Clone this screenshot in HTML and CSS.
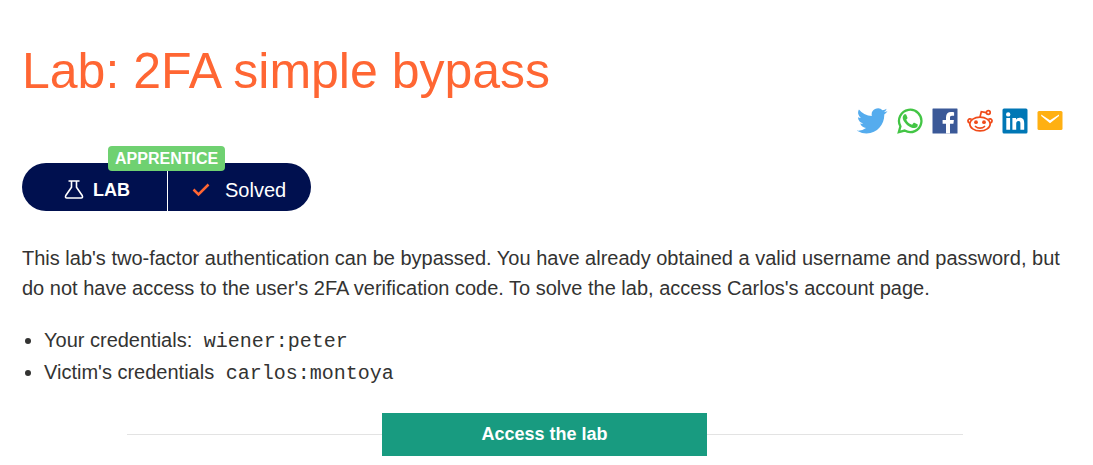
FILE: index.html
```html
<!DOCTYPE html>
<html lang="en">
<head>
<meta charset="utf-8">
<title>Lab: 2FA simple bypass</title>
<link rel="stylesheet" href="styles.css">
</head>
<body>
<main class="page">
  <h1 class="title">Lab: 2FA simple bypass</h1>
  <nav class="share" aria-label="Share">
    <a class="share-link" href="#" aria-label="Twitter"><svg viewBox="0 0 24 20" width="31" height="26"><path fill="#55acee" d="M23.6 2.4c-.9.4-1.8.6-2.8.8 1-.6 1.8-1.6 2.1-2.7-.9.6-2 1-3.1 1.2a4.9 4.9 0 0 0-8.3 4.5A13.8 13.8 0 0 1 1.500 1.100a4.900 4.900 0 0 0 1.500 6.500c-.8 0-1.600-.2-2.200-.6v.1c0 2.300 1.700 4.300 3.900 4.800-.7.2-1.500.2-2.200.1.600 1.900 2.400 3.300 4.500 3.400A9.800 9.800 0 0 1-.2 17.400 13.800 13.800 0 0 0 7.300 19.600c9 0 14.100-7.700 13.800-14.600 1-.7 1.800-1.600 2.500-2.600z"/></svg></a>
    <a class="share-link" href="#" aria-label="WhatsApp"><svg viewBox="0 0 26 26" width="26" height="26"><path fill="none" stroke="#43c545" stroke-width="2.300" d="M1.800 24.200l1.600-5.900A11.200 11.200 0 1 1 7.600 22.600z"/><path fill="#43c545" d="M9.300 6.800c-.3-.6-.6-.6-1.100-.6-.4 0-.9.100-1.300.6-.5.600-1.200 1.500-1.200 3 0 1.800 1.300 3.600 1.600 4 .3.400 2.600 4 6.300 5.400 3.100 1.200 3.700.9 4.400.8.700-.1 2.200-.9 2.500-1.800.3-.8.300-1.600.2-1.700-.1-.2-.4-.3-.8-.5l-2.500-1.200c-.4-.1-.7-.2-.9.200l-1.200 1.500c-.2.200-.4.300-.8.100-2.500-1-4-2.500-5.100-4.500-.2-.4 0-.6.200-.8l.7-.9c.3-.4.300-.6.100-1z"/></svg></a>
    <a class="share-link" href="#" aria-label="Facebook"><svg viewBox="0 0 26 26" width="26" height="26"><path fill="#3b5998" d="M1 .5h24q.5 0 .5.5v24q0 .5-.5.500H1Q.5 25.500.5 25V1Q.5.5 1 .5z"/><path fill="#fff" d="M14 25.500v-9.700h-3.400V12H14V9.200c0-3.400 2-5.200 5-5.200 1.500 0 2.700.1 3.100.2v3.500H20c-1.600 0-2 .8-2 2V12h3.900l-.5 3.800H18v9.700z"/></svg></a>
    <a class="share-link" href="#" aria-label="Reddit"><svg viewBox="0 0 26 26" width="26" height="26"><g fill="none" stroke="#f04b1a" stroke-width="1.700"><path d="M4.600 11.400C1.600 9.300-.7 13.200 2.800 15.400M21.400 11.400c3-2.100 5.300 1.800 1.800 4"/><ellipse cx="13" cy="16" rx="10.200" ry="6.900"/><path d="M13 9l1.300-5.300 5 1"/><circle cx="21.300" cy="4.500" r="1.900"/><path stroke-linecap="round" d="M8.500 18.500c2.200 2.200 6.800 2.200 9 0"/></g><circle cx="9" cy="14.200" r="1.900" fill="#f04b1a"/><circle cx="17" cy="14.200" r="1.900" fill="#f04b1a"/></svg></a>
    <a class="share-link" href="#" aria-label="LinkedIn"><svg viewBox="0 0 26 26" width="26" height="26"><rect x=".5" y=".5" width="25" height="25" rx="1.500" fill="#0077b5"/><path fill="#fff" d="M4.300 10h3.800v11.800H4.300zM6.200 4.200a2.200 2.200 0 1 1 0 4.400 2.200 2.200 0 0 1 0-4.400zM10.400 10H14v1.700c.6-1.100 1.900-2 3.700-2 3.700 0 4.500 2.400 4.500 5.600v6.500h-3.800V16c0-1.400 0-3.100-1.900-3.100s-2.300 1.500-2.300 3v5.900h-3.800z"/></svg></a>
    <a class="share-link" href="#" aria-label="Email"><svg viewBox="0 0 26 26" width="26" height="26"><rect x=".5" y="3" width="25" height="19" rx="1.500" fill="#ffb012"/><path fill="#fff" d="M4.200 6.500L13 12.300 22 6.500v1.500L13 15.300 4.200 8z"/></svg></a>
  </nav>

  <div class="status">
    <span class="level">APPRENTICE</span>
    <span class="status-part status-lab"><svg viewBox="0 0 20 20" width="20" height="20" fill="none" stroke="#fff" stroke-width="1.600" stroke-linejoin="round"><path d="M4.500 1h11M7.500 1v6.300L1.800 15.500Q.8 18 3 18h14q2.200 0 1.200-2.500L12.500 7.300V1"/></svg><strong class="lab-text">LAB</strong></span>
    <span class="status-part status-solved"><svg viewBox="0 0 18 14" width="18" height="14" fill="none" stroke="#ff6633" stroke-width="2.500"><path d="M1.500 6.500l5 5L16.500 1.500"/></svg><span>Solved</span></span>
  </div>

  <p class="intro">This lab's two-factor authentication can be bypassed. You have already obtained a valid username and password, but do not have access to the user's 2FA verification code. To solve the lab, access Carlos's account page.</p>
  <ul class="credentials">
    <li>Your credentials: <code>wiener:peter</code></li>
    <li>Victim's credentials <code>carlos:montoya</code></li>
  </ul>
  <div class="launch"><a class="launch-button" href="#">Access the lab</a></div>
</main>
</body>
</html>
```

FILE: styles.css
```css
body {
  margin: 0;
  background: #fff;
  color: #333332;
  font-family: "Liberation Sans", Arial, sans-serif;
  font-size: 20px;
  line-height: 30px;
}

.page {
  padding: 41px 26px 8px 22px;
}

.title {
  margin: 0;
  color: #ff6633;
  font-size: 50px;
  font-weight: 400;
  line-height: 60px;
}

.share {
  display: flex;
  justify-content: flex-end;
  gap: 9px;
  margin-top: 7px;
  padding-right: 4px;
}

.share-link {
  display: flex;
}

.status {
  position: relative;
  display: flex;
  width: fit-content;
  margin-top: 29px;
  border-radius: 24px;
  background: #00104f;
  color: #fff;
}

.status-part {
  display: flex;
  align-items: center;
  box-sizing: border-box;
  height: 48px;
  padding-top: 5px;
}

.status-lab {
  gap: 9px;
  padding-right: 37px;
  padding-left: 42px;
  border-right: 1px solid #fff;
}

.lab-text {
  font-size: 18px;
}

.status-solved {
  gap: 15px;
  padding-right: 25px;
  padding-left: 24px;
}

.level {
  position: absolute;
  top: -17px;
  left: 86px;
  padding: 0 7px;
  border-radius: 4px;
  background: #6fd171;
  font-size: 16px;
  font-weight: 700;
  line-height: 25px;
}

.intro {
  margin: 32px 0 0;
}

.credentials {
  margin: 21px 0 0;
  padding-left: 22px;
  line-height: 32px;
}

.credentials code {
  margin-left: 6px;
  font-family: "Courier New", "Liberation Mono", monospace;
  font-size: 20px;
  line-height: 20px;
}

.launch {
  display: flex;
  align-items: center;
  width: 80%;
  margin: 25px auto 0;
}

.launch::before,
.launch::after {
  flex: 1;
  height: 1px;
  background: #e3e3e3;
  content: "";
}

.launch-button {
  padding: 6px 99px 7px;
  background: #189b80;
  color: #fff;
  font-size: 18px;
  font-weight: 700;
  text-decoration: none;
}
```
